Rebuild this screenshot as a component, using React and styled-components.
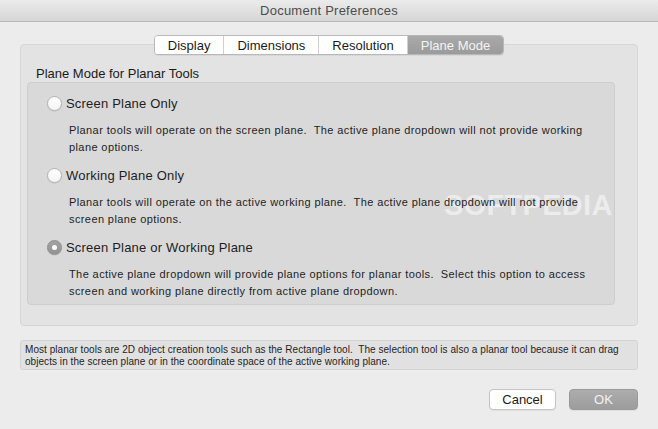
import styled, { createGlobalStyle } from "styled-components";

const GlobalStyle = createGlobalStyle`
  html, body {
    margin: 0;
    padding: 0;
    background: #ececec;
  }
  body {
    font-family: "Liberation Sans", Arial, sans-serif;
    -webkit-font-smoothing: antialiased;
  }
`;

const tabs = ["Display", "Dimensions", "Resolution", "Plane Mode"];

const options = [
  {
    label: "Screen Plane Only",
    text: "Planar tools will operate on the screen plane.  The active plane dropdown will not provide working\nplane options.",
  },
  {
    label: "Working Plane Only",
    text: "Planar tools will operate on the active working plane.  The active plane dropdown will not provide\nscreen plane options.",
  },
  {
    label: "Screen Plane or Working Plane",
    text: "The active plane dropdown will provide plane options for planar tools.  Select this option to access\nscreen and working plane directly from active plane dropdown.",
    checked: true,
  },
];

const App = () => {
  return (
    <>
      <GlobalStyle />
      <Window>
        <TitleBar>Document Preferences</TitleBar>

        <Body>
          <TabBar>
            {tabs.map((t) => (
              <Tab key={t} $active={t === "Plane Mode"}>
                {t}
              </Tab>
            ))}
          </TabBar>

          <GroupBox>
            <Legend>Plane Mode for Planar Tools</Legend>
            <InnerBox>
              <Watermark>SOFTPEDIA</Watermark>
              {options.map((o) => (
                <Option key={o.label}>
                  <RadioRow>
                    <Radio $checked={o.checked} />
                    <RadioLabel>{o.label}</RadioLabel>
                  </RadioRow>
                  <Description>{o.text}</Description>
                </Option>
              ))}
            </InnerBox>
          </GroupBox>

          <InfoBox>
            {"Most planar tools are 2D object creation tools such as the Rectangle tool.  The selection tool is also a planar tool because it can drag\nobjects in the screen plane or in the coordinate space of the active working plane."}
          </InfoBox>

          <ButtonRow>
            <Button>Cancel</Button>
            <Button $primary>OK</Button>
          </ButtonRow>
        </Body>
      </Window>
    </>
  );
};

export default App;

const Window = styled.div`
  width: 658px;
  height: 429px;
  background: #ececec;
  display: flex;
  flex-direction: column;
  overflow: hidden;
  border-radius: 0 0 5px 5px;
`;

const TitleBar = styled.div`
  height: 21px;
  flex: none;
  display: flex;
  align-items: center;
  justify-content: center;
  background: linear-gradient(#ebebeb, #d6d6d6);
  border-bottom: 1px solid #b9b9b9;
  color: #4d4d4d;
  font-size: 13px;
  letter-spacing: 0.25px;
`;

const Body = styled.div`
  display: flex;
  flex-direction: column;
  padding: 0 20px;
`;

const TabBar = styled.div`
  position: relative;
  z-index: 1;
  align-self: center;
  display: flex;
  margin: 13px 0 -11px;
  height: 18px;
  border: 1px solid #b8b8b8;
  border-radius: 4px;
  background: #fff;
  overflow: hidden;
  box-shadow: 0 1px 1px rgba(0, 0, 0, 0.06);
`;

const Tab = styled.div`
  display: flex;
  align-items: center;
  padding: 0 13px;
  font-size: 13px;
  color: ${(p) => (p.$active ? "#f4f4f4" : "#1a1a1a")};
  background: ${(p) => (p.$active ? "linear-gradient(#a9a9a9, #9b9b9b)" : "#fff")};
  & + & {
    border-left: 1px solid #cfcfcf;
  }
`;

const GroupBox = styled.div`
  height: 282px;
  box-sizing: border-box;
  background: #e3e3e3;
  border: 1px solid #d6d6d6;
  border-radius: 4px;
  padding: 21px 22px 0 6px;
  display: flex;
  flex-direction: column;
`;

const Legend = styled.div`
  font-size: 13px;
  color: #1a1a1a;
  padding-left: 9px;
  height: 16px;
  line-height: 16px;
`;

const InnerBox = styled.div`
  position: relative;
  height: 223px;
  box-sizing: border-box;
  background: #d9d9d9;
  border: 1px solid #cdcdcd;
  border-radius: 4px;
  padding: 11px 0 0 19px;
  display: flex;
  flex-direction: column;
`;

const Option = styled.div`
  position: relative;
  display: flex;
  flex-direction: column;
`;

const RadioRow = styled.div`
  display: flex;
  align-items: center;
  height: 18px;
  gap: 4px;
`;

const Radio = styled.span`
  width: 15px;
  height: 15px;
  box-sizing: border-box;
  border-radius: 50%;
  position: relative;
  border: 1px solid ${(p) => (p.$checked ? "#8e8e8e" : "#b3b3b3")};
  background: ${(p) =>
    p.$checked ? "linear-gradient(#a3a3a3, #929292)" : "linear-gradient(#ffffff, #f3f3f3)"};
  box-shadow: 0 0.5px 1px rgba(0, 0, 0, 0.12);

  &::after {
    content: "";
    display: ${(p) => (p.$checked ? "block" : "none")};
    position: absolute;
    left: 50%;
    top: 50%;
    width: 5px;
    height: 5px;
    margin: -2.5px 0 0 -2.5px;
    border-radius: 50%;
    background: #fff;
  }
`;

const RadioLabel = styled.span`
  font-size: 13px;
  letter-spacing: 0.2px;
  color: #1e1e1e;
`;

const Description = styled.div`
  margin: 10px 0 10px 22px;
  font-size: 11px;
  letter-spacing: 0.4px;
  line-height: 17px;
  color: #1e1e1e;
  white-space: pre;
`;

const Watermark = styled.div`
  position: absolute;
  left: 416px;
  top: 106px;
  font-size: 29px;
  font-weight: bold;
  letter-spacing: 0.3px;
  color: rgba(255, 255, 255, 0.5);
  pointer-events: none;
`;

const InfoBox = styled.div`
  margin-top: 14px;
  height: 30px;
  box-sizing: border-box;
  background: #e1e1e1;
  border: 1px solid #d4d4d4;
  border-radius: 3px;
  padding: 3px 4px;
  font-size: 10px;
  letter-spacing: 0.05px;
  line-height: 12px;
  color: #1e1e1e;
  white-space: pre;
  overflow: hidden;
`;

const ButtonRow = styled.div`
  display: flex;
  justify-content: flex-end;
  gap: 13px;
  margin-top: 19px;
`;

const Button = styled.button`
  height: 21px;
  width: ${(p) => (p.$primary ? "69px" : "67px")};
  padding: 0;
  font-family: "Liberation Sans", Arial, sans-serif;
  font-size: 13px;
  border-radius: 4px;
  color: ${(p) => (p.$primary ? "#f2f2f2" : "#1a1a1a")};
  background: ${(p) => (p.$primary ? "linear-gradient(#adadad, #9c9c9c)" : "#fff")};
  border: 1px solid ${(p) => (p.$primary ? "#999" : "#c4c4c4")};
  box-shadow: 0 1px 1px rgba(0, 0, 0, 0.06);
`;
